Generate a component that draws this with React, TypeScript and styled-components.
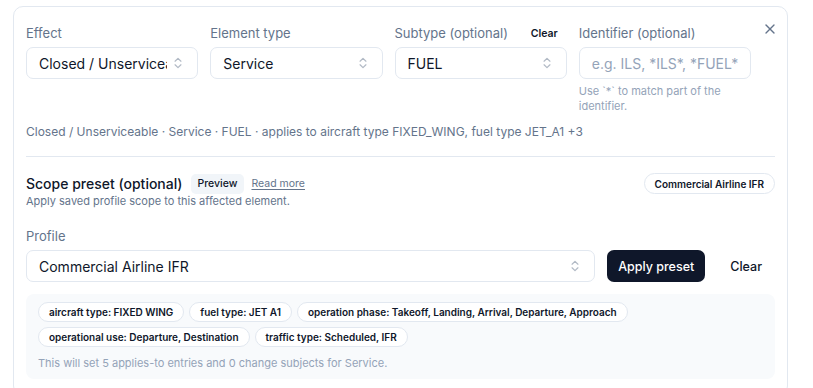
import React from "react";
import styled, { createGlobalStyle } from "styled-components";
import { ChevronsUpDown, X } from "lucide-react";

const GlobalStyle = createGlobalStyle`
  html, body {
    margin: 0;
    padding: 0;
    overflow: hidden;
    background: #fff;
    font-family: Inter, "Noto Sans", "Liberation Sans", sans-serif;
    color: #0f172a;
  }
  * { box-sizing: border-box; }
`;

const Page = styled.div`
  padding: 6px 25px 0 13px;
`;

const Card = styled.div`
  position: relative;
  border: 1px solid #e2e8f0;
  border-radius: 10px;
  padding: 18px 12px 16px 12px;
  background: #fff;
`;

const CloseButton = styled.button`
  position: absolute;
  top: 14px;
  right: 9px;
  width: 16px;
  height: 16px;
  padding: 0;
  border: none;
  background: none;
  color: #64748b;
  display: flex;
  align-items: center;
  justify-content: center;
`;

const FieldGrid = styled.div`
  display: grid;
  grid-template-columns: repeat(4, minmax(0, 1fr));
  align-items: start;
  gap: 12px;
  padding-right: 24px;
`;

const Field = styled.div`
  display: flex;
  flex-direction: column;
  min-width: 0;
`;

const LabelRow = styled.div`
  display: flex;
  align-items: center;
  justify-content: space-between;
  height: 16px;
  margin-bottom: 6px;
`;

const Label = styled.label`
  font-size: 13px;
  line-height: 16px;
  color: #64748b;
`;

const SmallLink = styled.button`
  border: none;
  background: none;
  padding: 0 9px 0 0;
  font-family: inherit;
  font-size: 10.5px;
  font-weight: 600;
  color: #0f172a;
`;

const SelectBox = styled.div<{ $grow?: boolean }>`
  display: flex;
  align-items: center;
  gap: 4px;
  height: 32px;
  padding: 0 12px;
  border: 1px solid #e2e8f0;
  border-radius: 7px;
  background: #fff;
  font-size: 14px;
  color: #0f172a;
  min-width: 0;
  flex: ${(p) => (p.$grow ? "1" : "none")};
`;

const SelectText = styled.span`
  flex: 1;
  min-width: 0;
  overflow: hidden;
  white-space: nowrap;
`;

const Chevron = styled(ChevronsUpDown)`
  flex: none;
  color: #64748b;
  opacity: 0.5;
`;

const TextInput = styled.input`
  height: 32px;
  padding: 0 12px;
  border: 1px solid #e2e8f0;
  border-radius: 7px;
  font-family: inherit;
  font-size: 14px;
  color: #0f172a;
  width: 100%;
  outline: none;
  &::placeholder {
    color: #94a3b8;
  }
`;

const Help = styled.p`
  margin: 5px 0 0;
  font-size: 11px;
  line-height: 15px;
  color: #94a3b8;
  padding-right: 14px;
`;

const Summary = styled.p`
  margin: 10px 0 0;
  font-size: 12px;
  line-height: 16px;
  color: #64748b;
`;

const Divider = styled.hr`
  border: none;
  border-top: 1px solid #e2e8f0;
  margin: 16px 0 16px;
`;

const HeaderRow = styled.div`
  display: flex;
  align-items: flex-start;
  justify-content: space-between;
`;

const TitleLine = styled.div`
  display: flex;
  align-items: center;
  gap: 8px;
  height: 21px;
`;

const Title = styled.h3`
  margin: 0;
  font-size: 14px;
  font-weight: 500;
  line-height: 20px;
  color: #0f172a;
`;

const Badge = styled.span`
  display: inline-flex;
  align-items: center;
  height: 20px;
  padding: 0 7px;
  border-radius: 5px;
  background: #f1f5f9;
  font-size: 10.5px;
  font-weight: 500;
  color: #0f172a;
`;

const ReadMore = styled.a`
  margin-left: -1px;
  font-size: 10.5px;
  color: #64748b;
  text-decoration: underline;
  text-underline-offset: 2px;
`;

const Description = styled.p`
  margin: 0;
  font-size: 11px;
  line-height: 15px;
  color: #64748b;
`;

const Pill = styled.span`
  display: inline-flex;
  align-items: center;
  height: 21px;
  padding: 0 10px;
  border: 1px solid #e2e8f0;
  border-radius: 999px;
  font-size: 10px;
  font-weight: 600;
  color: #0f172a;
`;

const ProfileBlock = styled.div`
  margin-top: 19px;
`;

const ActionRow = styled.div`
  display: flex;
  align-items: center;
  gap: 12px;
`;

const Button = styled.button<{ $variant?: "primary" | "ghost" }>`
  height: 32px;
  padding: 0 ${(p) => (p.$variant === "primary" ? "11px" : "13px")};
  border: none;
  border-radius: 7px;
  font-family: inherit;
  font-size: 12.5px;
  font-weight: 500;
  background: ${(p) => (p.$variant === "primary" ? "#0f172a" : "transparent")};
  color: ${(p) => (p.$variant === "primary" ? "#fff" : "#0f172a")};
`;

const PreviewBox = styled.div`
  margin-top: 12px;
  padding: 8px 12px;
  border-radius: 8px;
  background: #f8fafc;
`;

const ChipList = styled.div`
  display: flex;
  flex-wrap: wrap;
  gap: 5px 5px;
`;

const Chip = styled.span`
  display: inline-flex;
  align-items: center;
  height: 20px;
  padding: 0 10px;
  border: 1px solid #e2e8f0;
  border-radius: 999px;
  background: #fff;
  font-size: 10px;
  font-weight: 600;
  color: #0f172a;
`;

const PreviewNote = styled.p`
  margin: 9px 0 0;
  font-size: 11px;
  line-height: 15px;
  color: #94a3b8;
`;

const chips = [
  "aircraft type: FIXED WING",
  "fuel type: JET A1",
  "operation phase: Takeoff, Landing, Arrival, Departure, Approach",
  "operational use: Departure, Destination",
  "traffic type: Scheduled, IFR",
];

const Select: React.FC<{ value: string; grow?: boolean }> = ({ value, grow }) => (
  <SelectBox $grow={grow}>
    <SelectText>{value}</SelectText>
    <Chevron size={14} />
  </SelectBox>
);

export default function App() {
  return (
    <Page>
      <GlobalStyle />
      <Card>
        <CloseButton aria-label="Close">
          <X size={16} strokeWidth={2} />
        </CloseButton>

        <FieldGrid>
          <Field>
            <LabelRow>
              <Label>Effect</Label>
            </LabelRow>
            <Select value="Closed / Unserviceable" />
          </Field>
          <Field>
            <LabelRow>
              <Label>Element type</Label>
            </LabelRow>
            <Select value="Service" />
          </Field>
          <Field>
            <LabelRow>
              <Label>Subtype (optional)</Label>
              <SmallLink>Clear</SmallLink>
            </LabelRow>
            <Select value="FUEL" />
          </Field>
          <Field>
            <LabelRow>
              <Label>Identifier (optional)</Label>
            </LabelRow>
            <TextInput placeholder="e.g. ILS, *ILS*, *FUEL*" />
            <Help>Use `*` to match part of the identifier.</Help>
          </Field>
        </FieldGrid>

        <Summary>
          Closed / Unserviceable · Service · FUEL · applies to aircraft type FIXED_WING, fuel type JET_A1 +3
        </Summary>

        <Divider />

        <HeaderRow>
          <div>
            <TitleLine>
              <Title>Scope preset (optional)</Title>
              <Badge>Preview</Badge>
              <ReadMore>Read more</ReadMore>
            </TitleLine>
            <Description>Apply saved profile scope to this affected element.</Description>
          </div>
          <Pill>Commercial Airline IFR</Pill>
        </HeaderRow>

        <ProfileBlock>
          <LabelRow>
            <Label>Profile</Label>
          </LabelRow>
          <ActionRow>
            <Select value="Commercial Airline IFR" grow />
            <Button $variant="primary">Apply preset</Button>
            <Button $variant="ghost">Clear</Button>
          </ActionRow>
        </ProfileBlock>

        <PreviewBox>
          <ChipList>
            {chips.map((c) => (
              <Chip key={c}>{c}</Chip>
            ))}
          </ChipList>
          <PreviewNote>This will set 5 applies-to entries and 0 change subjects for Service.</PreviewNote>
        </PreviewBox>
      </Card>
    </Page>
  );
}
